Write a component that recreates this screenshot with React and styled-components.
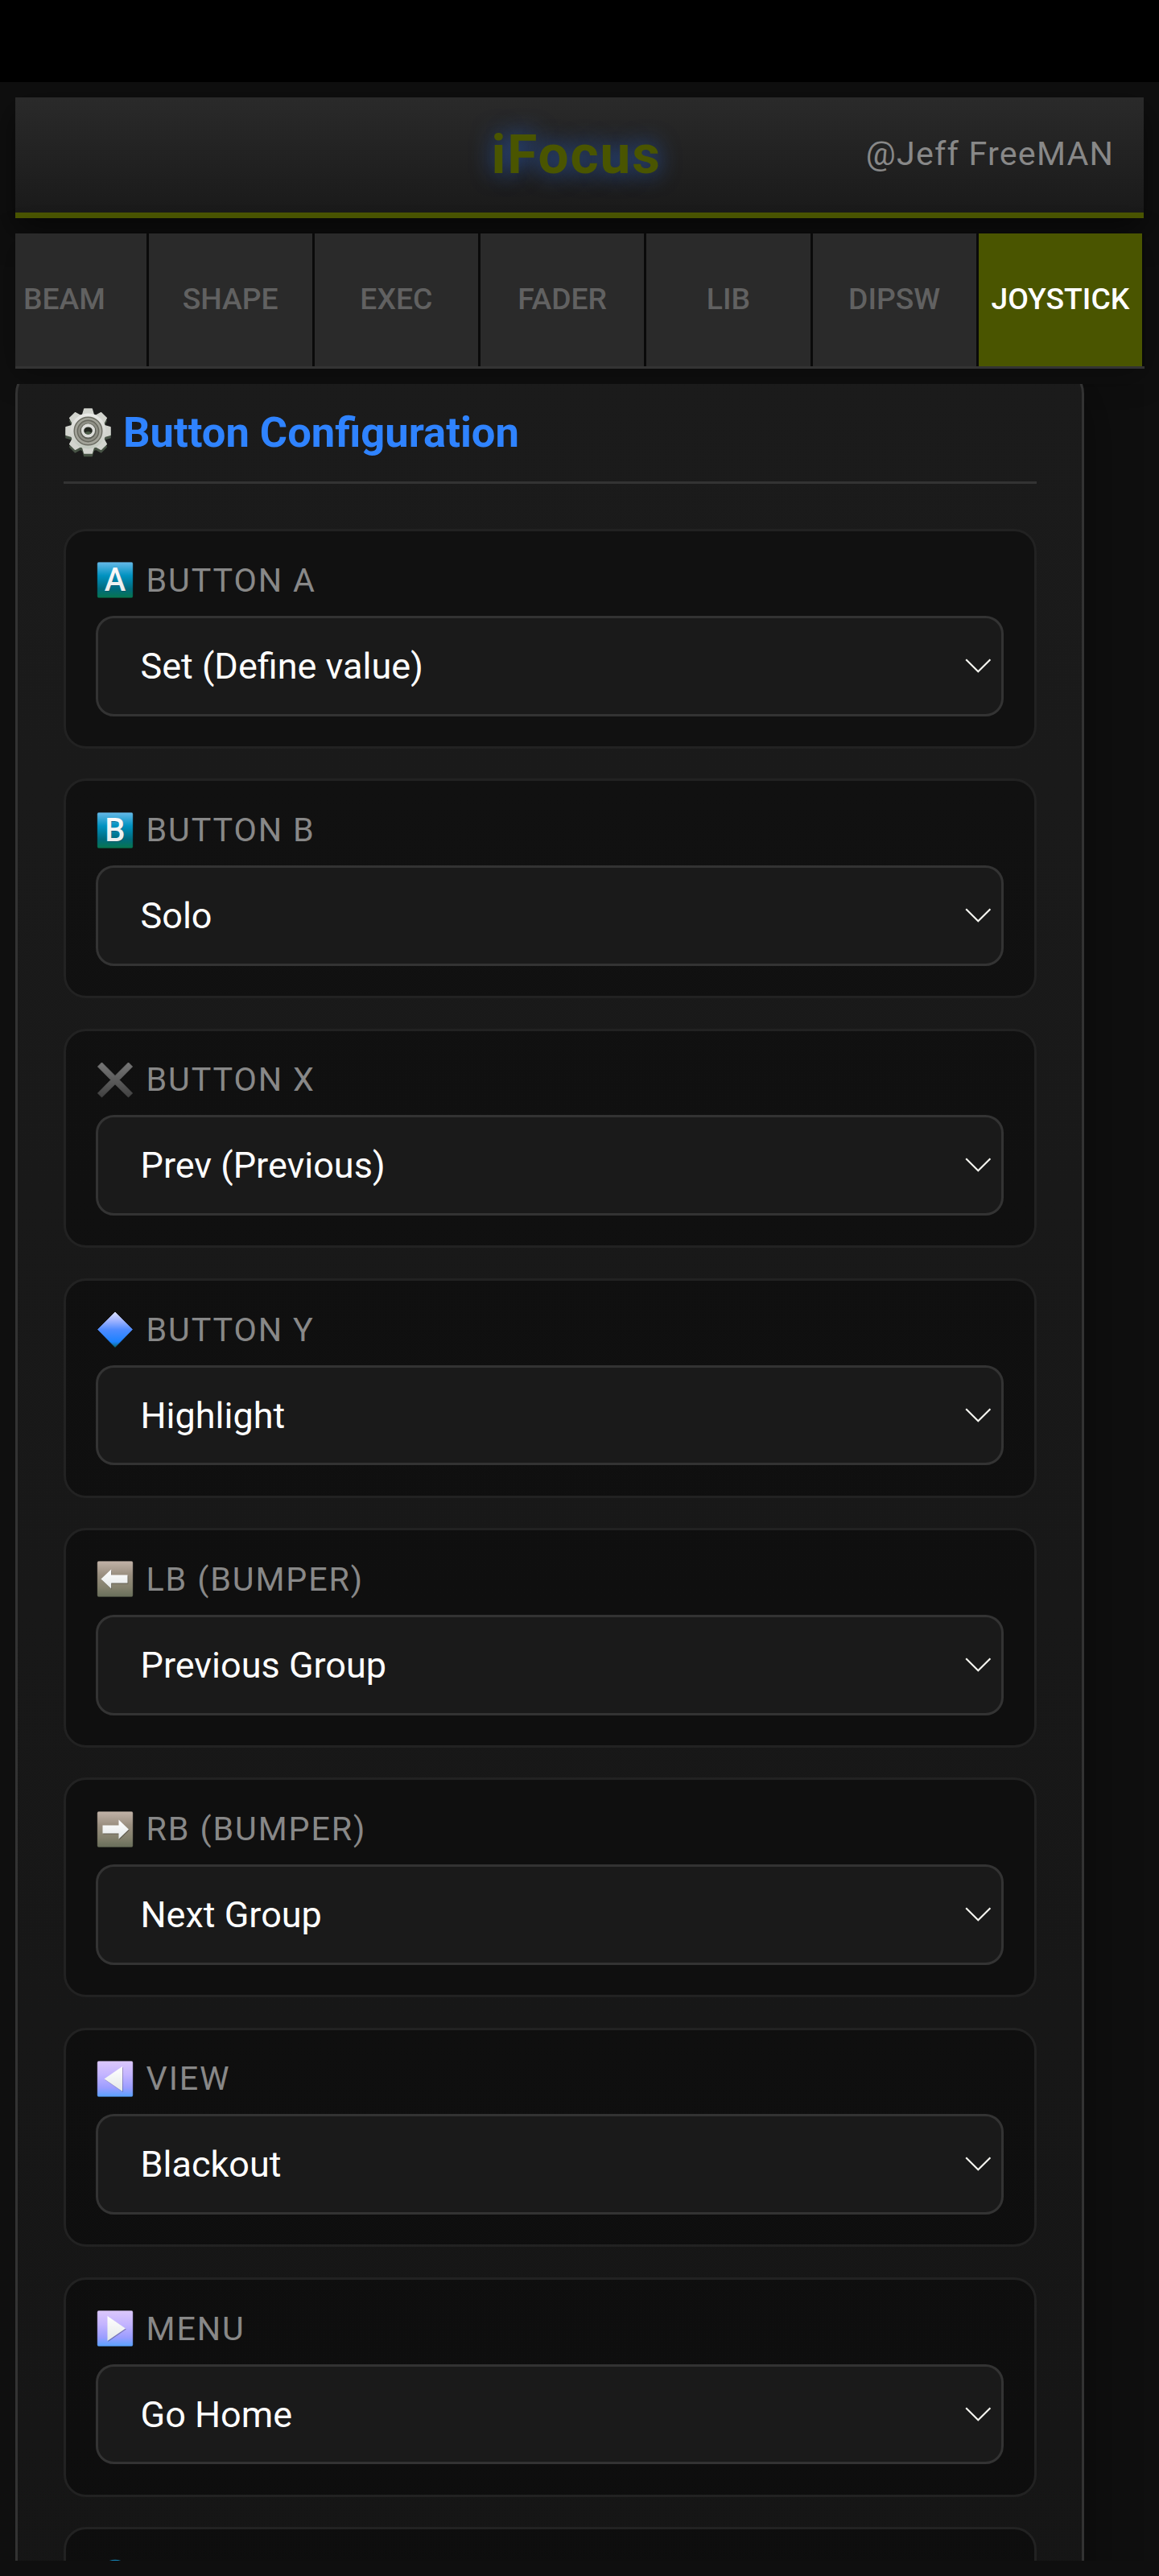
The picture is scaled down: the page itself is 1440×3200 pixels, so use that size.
import React from 'react'
import styled, { createGlobalStyle } from 'styled-components'

const GlobalStyle = createGlobalStyle`
    * {
        box-sizing: border-box;
    }
    body {
        margin: 0;
        background: #0f0f0f;
        font-family: Roboto, "Liberation Sans", sans-serif;
    }
`;

const Page = styled.div`
    display: flex;
    flex-direction: column;
    width: 1440px;
    height: 3200px;
    overflow: hidden;
    background: #0f0f0f;
`;

const StatusBar = styled.div`
    flex: 0 0 102px;
    background: #000;
`;

const Screen = styled.div`
    flex: 1;
    min-height: 0;
    display: flex;
    flex-direction: column;
    gap: 19px;
    padding: 19px 18.75px 19px 19px;
    overflow: hidden;
`;

const Header = styled.header`
    flex: 0 0 150px;
    display: grid;
    grid-template-columns: 1fr auto 1fr;
    align-items: center;
    padding: 0 37px 0 29px;
    background: linear-gradient(180deg, #2a2a2a, #1a1a1a);
    border-bottom: 7px solid #4a5500;
    box-shadow: 0 15px 38px rgba(0, 0, 0, 0.5);
`;

const Logo = styled.h1`
    grid-column: 2;
    margin: 0 0 2px;
    color: #4a5500;
    font-size: 67.5px;
    font-weight: 700;
    line-height: 1;
    letter-spacing: 1.875px;
    text-shadow: 0 0 28px rgba(48, 120, 255, 0.6);
`;

const Author = styled.span`
    justify-self: end;
    margin-bottom: 2px;
    color: #888;
    font-size: 41.25px;
    line-height: 1;
    letter-spacing: 1.2px;
`;

const Tabs = styled.nav`
    flex: 0 0 168px;
    display: flex;
    justify-content: flex-end;
    margin-right: -0.75px;
    overflow: hidden;
    background: #2a2a2a;
    border-bottom: 3px solid #333;
    box-shadow: 0 8px 38px rgba(0, 0, 0, 0.3);
`;

const Tab = styled.button`
    flex: 0 0 206.25px;
    display: flex;
    align-items: center;
    justify-content: center;
    padding: 0 0 3px;
    border: 0;
    border-right: 3px solid #0a0a0a;
    background: ${(props) => (props.$active ? '#4a5500' : '#2a2a2a')};
    color: ${(props) => (props.$active ? '#fff' : '#616161')};
    font-family: inherit;
    font-size: 37.3px;
    font-weight: 500;
`;

const ScrollArea = styled.main`
    flex: 1;
    min-height: 0;
    overflow: hidden;
`;

const Panel = styled.section`
    width: 1328px;
    height: 3600px;
    margin-top: -22px;
    padding: 48px 56px 56px 57px;
    border: 3px solid #333;
    border-radius: 34px;
    background: linear-gradient(180deg, #1b1b1b, #141414);
    box-shadow: 0 15px 75px rgba(0, 0, 0, 0.4);
`;

const PanelTitle = styled.h2`
    display: flex;
    align-items: center;
    gap: 15px;
    height: 95px;
    margin: 0 0 56px;
    padding: 0 0 29px 2px;
    border-bottom: 3px solid #333;
    color: #2f83ff;
    font-size: 52.5px;
    font-weight: 700;
    line-height: 1;
`;

const CardList = styled.div`
    display: flex;
    flex-direction: column;
    gap: 37.5px;
`;

const Card = styled.div`
    height: 272.75px;
    padding: 37.5px 38px 37.5px 37px;
    border: 3px solid #222;
    border-radius: 28px;
    background: rgba(0, 0, 0, 0.34);
`;

const Label = styled.div`
    display: flex;
    align-items: center;
    gap: 14.5px;
    height: 46.5px;
    margin-bottom: 20.9px;
    color: #888;
    font-size: 41.25px;
    letter-spacing: 1.875px;
    text-transform: uppercase;
`;

const SelectBox = styled.button`
    display: flex;
    align-items: center;
    justify-content: space-between;
    width: 100%;
    height: 124.75px;
    padding: 0 12px 0 52.5px;
    border: 3px solid #333;
    border-radius: 22.5px;
    background: #1a1a1a;
    color: #fff;
    font-family: inherit;
    font-size: 45px;
`;

const IconSvg = styled.svg`
    flex: none;
    display: block;
`;

const tiles = {
    letter: ['#66b9e8', '#0092c0', '#006b7d', '#08764f'],
    bumper: ['#c2b3a8', '#9a8f80', '#82806c', '#686e5a'],
    media: ['#dcc8fb', '#c4b4ff', '#9b9dff', '#58a2ff'],
};

const Tile = ({ kind, children }) => (
    <IconSvg width="48" height="47" viewBox="-1.5 -1 48 47">
        <defs>
            <linearGradient id={`tile-${kind}`} x1="0" y1="0" x2="0" y2="1">
                <stop offset="0" stopColor={tiles[kind][0]} />
                <stop offset="0.38" stopColor={tiles[kind][1]} />
                <stop offset="0.75" stopColor={tiles[kind][2]} />
                <stop offset="1" stopColor={tiles[kind][3]} />
            </linearGradient>
            <linearGradient id="tile-glyph" x1="0" y1="0" x2="0" y2="1">
                <stop offset="0" stopColor="#fff" />
                <stop offset="1" stopColor="#e4e8e8" />
            </linearGradient>
        </defs>
        <rect x="0.3" y="0.3" width="44.4" height="44.4" rx="1.8" fill={`url(#tile-${kind})`} stroke="#000" strokeOpacity="0.3" strokeWidth="0.8" />
        {children}
    </IconSvg>
);

const LetterIcon = ({ letter }) => (
    <Tile kind="letter">
        <text x="23" y="37.4" textAnchor="middle" fontFamily="Roboto" fontSize="40" fontWeight="500" letterSpacing="0" fill="#00405a" fillOpacity="0.5">{letter}</text>
        <text x="22.5" y="36.4" textAnchor="middle" fontFamily="Roboto" fontSize="40" fontWeight="500" letterSpacing="0" fill="url(#tile-glyph)">{letter}</text>
    </Tile>
);

const ShapeIcon = ({ kind, points }) => (
    <Tile kind={kind}>
        <polygon points={points} transform="translate(0.8 1)" fill="#000" fillOpacity="0.28" />
        <polygon points={points} fill="url(#tile-glyph)" />
    </Tile>
);

const CrossIcon = () => (
    <IconSvg width="48" height="47" viewBox="-1.5 -1 48 47">
        <defs>
            <linearGradient id="cross" x1="0" y1="0" x2="0" y2="1">
                <stop offset="0" stopColor="#777" />
                <stop offset="1" stopColor="#414141" />
            </linearGradient>
        </defs>
        <polygon
            points="6,1 22.5,17.5 39,1 44,6 27.7,22.5 44,39 39,44 22.5,27.7 6,44 1,39 17.3,22.5 1,6"
            fill="url(#cross)"
            stroke="url(#cross)"
            strokeLinejoin="round"
        />
    </IconSvg>
);

const DiamondIcon = () => (
    <IconSvg width="48" height="47" viewBox="-1.5 -1 48 47">
        <defs>
            <linearGradient id="diamond" x1="0" y1="0" x2="0" y2="1">
                <stop offset="0" stopColor="#dbe0ff" />
                <stop offset="0.25" stopColor="#9db2ff" />
                <stop offset="0.5" stopColor="#4f8bff" />
                <stop offset="0.85" stopColor="#1b82ff" />
                <stop offset="1" stopColor="#0a6c74" />
            </linearGradient>
        </defs>
        <polygon points="22.5,1 44,22.5 22.5,44.5 1,22.5" fill="url(#diamond)" stroke="url(#diamond)" strokeWidth="0.8" strokeLinejoin="round" />
    </IconSvg>
);

const StickIcon = () => (
    <IconSvg width="48" height="47" viewBox="-1.5 -1 48 47">
        <circle cx="22.5" cy="22.3" r="22.5" fill="#1580b0" />
    </IconSvg>
);

const angles = [0, 45, 90, 135, 180, 225, 270, 315];

const GearBody = ({ fill }) => (
    <g fill={fill} stroke={fill} strokeWidth="1.5" strokeLinejoin="round">
        <circle cx="28.5" cy="28.5" r="21.5" />
        {angles.map((angle) => (
            <polygon key={angle} points="21.5,9 23.8,1 33.2,1 35.5,9" transform={`rotate(${angle} 28.5 28.5)`} />
        ))}
    </g>
);

const GearIcon = () => (
    <IconSvg width="57" height="61" viewBox="0 0 57 61">
        <defs>
            <linearGradient id="gear" gradientUnits="userSpaceOnUse" x1="0" y1="0" x2="0" y2="57">
                <stop offset="0" stopColor="#efefed" />
                <stop offset="0.6" stopColor="#d3d5cf" />
                <stop offset="1" stopColor="#b9c3b7" />
            </linearGradient>
        </defs>
        <g transform="translate(0 3.6)"><GearBody fill="#475345" /></g>
        <GearBody fill="#d2d4ce" />
        <circle cx="28.5" cy="28.5" r="22" fill="url(#gear)" />
        <circle cx="28.5" cy="28.5" r="17.3" fill="#a2a399" stroke="#6b6c62" strokeWidth="1.4" />
        <circle cx="28.5" cy="28.5" r="13.2" fill="#8d8e84" stroke="#66675d" strokeWidth="1.4" />
        <circle cx="28.5" cy="28.5" r="9.8" fill="#5c5e55" />
        <circle cx="28.5" cy="27.9" r="8.6" fill="#dcddd9" />
        <ellipse cx="28.5" cy="28" rx="5.3" ry="4.6" fill="#22261f" />
        <path d="M24 30.5 Q28.5 27.5 33 30.5 Q28.5 35 24 30.5Z" fill="#4d5d49" />
    </IconSvg>
);

const Chevron = () => (
    <IconSvg width="33" height="19" viewBox="0 0 33 19" fill="none" stroke="#f5f5f0" strokeWidth="2.2">
        <path d="M1.2 1.2 L16.3 16.3 L31.4 1.2" />
    </IconSvg>
);

const tabs = ['BEAM', 'SHAPE', 'EXEC', 'FADER', 'LIB', 'DIPSW', 'JOYSTICK'];

const buttons = [
    { icon: <LetterIcon letter="A" />, label: 'Button A', value: 'Set (Define value)' },
    { icon: <LetterIcon letter="B" />, label: 'Button B', value: 'Solo' },
    { icon: <CrossIcon />, label: 'Button X', value: 'Prev (Previous)' },
    { icon: <DiamondIcon />, label: 'Button Y', value: 'Highlight' },
    { icon: <ShapeIcon kind="bumper" points="5,22.5 17.7,10.5 17.7,17.5 38,17.5 38,27.5 17.7,27.5 17.7,34.5" />, label: 'LB (Bumper)', value: 'Previous Group' },
    { icon: <ShapeIcon kind="bumper" points="39.5,22.5 27,10.5 27,17.5 7,17.5 7,27.5 27,27.5 27,34.5" />, label: 'RB (Bumper)', value: 'Next Group' },
    { icon: <ShapeIcon kind="media" points="9,22.5 31.5,7 31.5,38" />, label: 'View', value: 'Blackout' },
    { icon: <ShapeIcon kind="media" points="35.5,22.5 13,7 13,38" />, label: 'Menu', value: 'Go Home' },
    { icon: <StickIcon />, label: '', value: '' },
];

const App = () => {
    return (
        <>
            <GlobalStyle />
            <Page>
                <StatusBar />
                <Screen>
                    <Header>
                        <Logo>iFocus</Logo>
                        <Author>@Jeff FreeMAN</Author>
                    </Header>
                    <Tabs>
                        {tabs.map((tab) => (
                            <Tab key={tab} type="button" $active={tab === 'JOYSTICK'}>{tab}</Tab>
                        ))}
                    </Tabs>
                    <ScrollArea>
                        <Panel>
                            <PanelTitle>
                                <GearIcon />
                                Button Configuration
                            </PanelTitle>
                            <CardList>
                                {buttons.map((button, index) => (
                                    <Card key={index}>
                                        <Label>
                                            {button.icon}
                                            {button.label}
                                        </Label>
                                        <SelectBox type="button">
                                            {button.value}
                                            <Chevron />
                                        </SelectBox>
                                    </Card>
                                ))}
                            </CardList>
                        </Panel>
                    </ScrollArea>
                </Screen>
            </Page>
        </>
    )
}

export default App
